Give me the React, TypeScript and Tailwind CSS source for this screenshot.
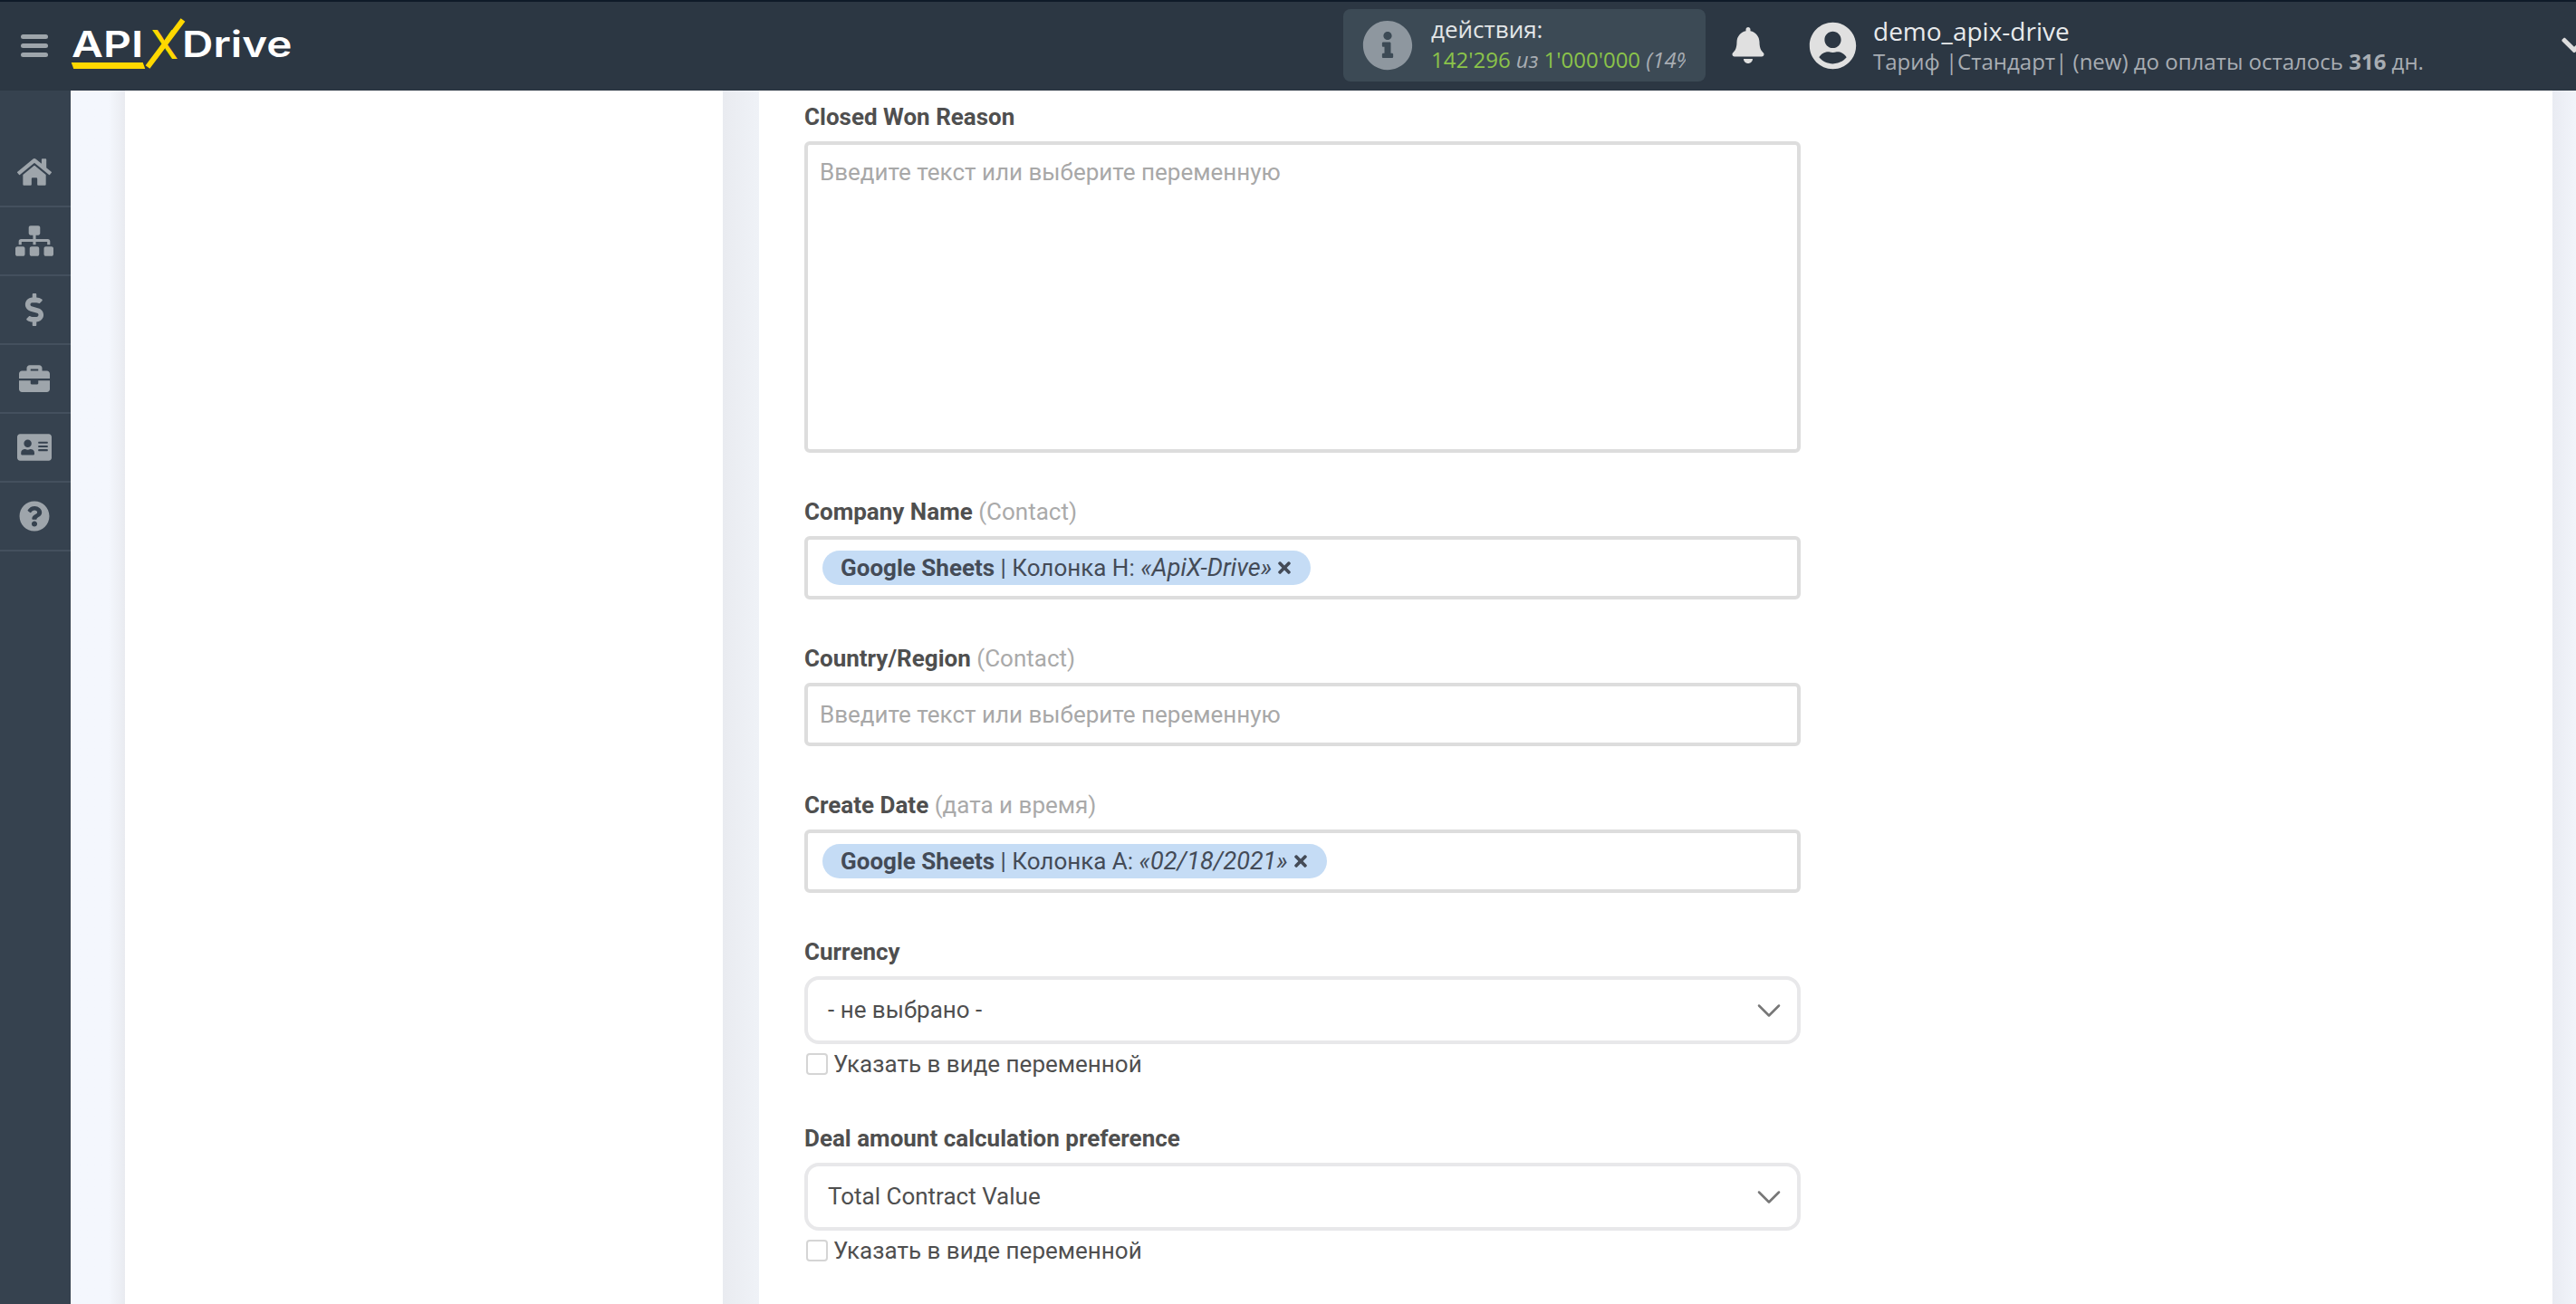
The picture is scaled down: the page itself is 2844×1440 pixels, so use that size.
import { ReactNode } from "react";
import {
  FaAddressCard,
  FaBell,
  FaBriefcase,
  FaChevronDown,
  FaDollarSign,
  FaHome,
  FaInfoCircle,
  FaQuestionCircle,
  FaSitemap,
  FaTimes,
  FaUserCircle,
} from "react-icons/fa";
import { ChevronDown } from "lucide-react";

const navItems = [
  { icon: <FaHome size={38} /> },
  { icon: <FaSitemap size={42} /> },
  { icon: <FaDollarSign size={36} /> },
  { icon: <FaBriefcase size={34} /> },
  { icon: <FaAddressCard size={38} /> },
  { icon: <FaQuestionCircle size={34} /> },
];

function Logo() {
  return (
    <div className="relative ml-[26px] h-[60px] w-[243px] font-['Inter',sans-serif] text-[40px] leading-[60px] font-semibold text-white">
      <span className="absolute left-0 top-[-1px] origin-left scale-x-[1.2]">API</span>
      <span className="absolute left-[87px] top-[-1px] text-[44px] font-medium text-[#ffd800]">X</span>
      <span className="absolute left-[122px] top-[-1px] origin-left scale-x-[1.19]">Drive</span>
      <div className="absolute left-[1px] top-[49px] h-[7px] w-[79px] skew-x-[20deg] bg-[#ffd800]" />
      <svg className="absolute left-0 top-0" width="243" height="60" viewBox="0 0 243 60">
        <line x1="84" y1="54" x2="123" y2="2" stroke="#ffd800" strokeWidth="6" />
      </svg>
    </div>
  );
}

function Header() {
  return (
    <header className="flex h-[100px] shrink-0 items-center overflow-hidden border-t-2 border-[#0f1b29] bg-[#2c3743] pb-[2px] font-['Open_Sans',sans-serif]">
      <div className="flex w-[1483px] shrink-0 items-center pl-[23px]">
        <div className="flex w-[30px] flex-col gap-[5px]">
          <div className="h-[5px] rounded-sm bg-[#9ea5ab]" />
          <div className="h-[5px] rounded-sm bg-[#9ea5ab]" />
          <div className="h-[5px] rounded-sm bg-[#9ea5ab]" />
        </div>
        <Logo />
      </div>

      <div className="flex h-[80px] w-[400px] shrink-0 items-center rounded-lg bg-[#3c4a55] pl-[21px]">
        <FaInfoCircle size={56} className="shrink-0 text-[#8e979f]" />
        <div className="ml-[20px] w-[281px] overflow-hidden whitespace-nowrap pb-[4px]">
          <div className="text-[26px] leading-[36px] text-[#e3e6e8]">действия:</div>
          <div className="text-[24px] leading-[32px] text-[#8bc34a]">
            142'296 <i className="text-[#a8adb3]">из</i> 1'000'000 <i className="text-[#a8adb3]">(14%)</i>
          </div>
        </div>
      </div>

      <FaBell size={40} className="ml-[27px] shrink-0 text-[#e0e0e0]" />

      <FaUserCircle size={53} className="ml-[47px] shrink-0 text-[#e0e0e0]" />
      <div className="ml-[18px] w-[620px] shrink-0 whitespace-nowrap">
        <div className="text-[28px] leading-[36px] text-[#e8eaec]">demo_apix-drive</div>
        <div className="text-[24px] leading-[32px] text-[#a8adb3]">
          Тариф |Стандарт| (new) до оплаты осталось <b>316</b> дн.
        </div>
      </div>
      <FaChevronDown size={32} className="ml-[138px] shrink-0 text-[#dddddd]" />
    </header>
  );
}

function Sidebar() {
  return (
    <aside className="w-[78px] shrink-0 bg-[#36424f] pt-[53px]">
      {navItems.map((item, i) => (
        <div key={i} className="flex h-[76px] items-center justify-center border-b-2 border-[#44505e] pr-[2px] text-[#9ea5ab]">
          {item.icon}
        </div>
      ))}
    </aside>
  );
}

function Label({ title, hint }: { title: string; hint?: string }) {
  return (
    <div className="text-[26px] leading-[32px] font-bold text-[#4f4f4f]">
      {title}
      {hint && <span className="font-normal text-[#aaaaaa]"> {hint}</span>}
    </div>
  );
}

function Chip({ column, value }: { column: string; value: string }) {
  return (
    <div className="inline-flex h-[38px] items-center whitespace-nowrap rounded-[19px] bg-[#c5dcf5] pl-[20px] pr-[19px] text-[26px] text-[#444b57]">
      <b>Google Sheets</b>
      <span>&nbsp;| Колонка {column}:&nbsp;</span>
      <i className="text-[27px]">{value}</i>
      <FaTimes size={20} className="ml-[4px]" />
    </div>
  );
}

function InputBox({ children, pad }: { children?: ReactNode; pad: string }) {
  return (
    <div className={`mt-[11px] mb-[49px] flex h-[70px] items-center rounded-md border-4 border-[#dddddd] bg-white ${pad}`}>
      {children}
    </div>
  );
}

function SelectField({ title, value }: { title: string; value: string }) {
  return (
    <div className="mb-[50px]">
      <Label title={title} />
      <div className="mt-[11px] flex h-[75px] items-center justify-between rounded-[16px] border-4 border-[#e8e8ea] bg-white pl-[22px] pr-[9px] text-[26px] text-[#4f4f4f]">
        <span>{value}</span>
        <ChevronDown size={44} strokeWidth={1.4} className="text-[#777777]" />
      </div>
      <div className="mt-[6px] flex h-[32px] items-center pl-[2px] text-[26px] text-[#4f4f4f]">
        <div className="h-[24px] w-[24px] rounded-[4px] border-2 border-[#d5d5d5] bg-white" />
        <span className="ml-[6px]">Указать в виде переменной</span>
      </div>
    </div>
  );
}

export default function App() {
  return (
    <div className="flex h-screen flex-col overflow-hidden bg-white font-['Roboto',sans-serif]">
      <Header />
      <div className="flex min-h-0 flex-1">
        <Sidebar />
        <div className="w-[60px] shrink-0 bg-linear-to-r from-[#f4f7fd] from-70% to-[#e9ebf0]" />
        <div className="w-[660px] shrink-0 bg-white" />
        <div className="w-[40px] shrink-0 bg-linear-to-r from-[#e9ebf0] to-[#eff2f7]" />
        <main className="min-w-0 flex-1 bg-white pl-[50px] pt-[13px]">
          <div className="w-[1100px]">
            <Label title="Closed Won Reason" />
            <div className="mt-[11px] mb-[49px] h-[344px] rounded-md border-4 border-[#dddddd] bg-white pl-[13px] pt-[14px] text-[26px] leading-[32px] text-[#a8a8a8]">
              Введите текст или выберите переменную
            </div>

            <Label title="Company Name" hint="(Contact)" />
            <InputBox pad="pl-[16px]">
              <Chip column="H" value="«ApiX-Drive»" />
            </InputBox>

            <Label title="Country/Region" hint="(Contact)" />
            <InputBox pad="pl-[13px]">
              <span className="text-[26px] text-[#a8a8a8]">Введите текст или выберите переменную</span>
            </InputBox>

            <Label title="Create Date" hint="(дата и время)" />
            <InputBox pad="pl-[16px]">
              <Chip column="A" value="«02/18/2021»" />
            </InputBox>

            <SelectField title="Currency" value="- не выбрано -" />
            <SelectField title="Deal amount calculation preference" value="Total Contract Value" />
          </div>
        </main>
        <div className="w-[26px] shrink-0 bg-linear-to-r from-[#e9ebf2] to-[#f1f4fa]" />
      </div>
    </div>
  );
}
